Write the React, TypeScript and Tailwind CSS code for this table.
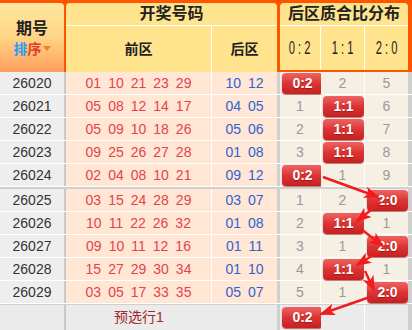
const rows = [
  { p: '26020', f: ['01', '10', '21', '23', '29'], b: ['10', '12'], d: ['0:2', '2', '5'], hit: 0 },
  { p: '26021', f: ['05', '08', '12', '14', '17'], b: ['04', '05'], d: ['1', '1:1', '6'], hit: 1 },
  { p: '26022', f: ['05', '09', '10', '18', '26'], b: ['05', '06'], d: ['2', '1:1', '7'], hit: 1 },
  { p: '26023', f: ['09', '25', '26', '27', '28'], b: ['01', '08'], d: ['3', '1:1', '8'], hit: 1 },
  { p: '26024', f: ['02', '04', '08', '10', '21'], b: ['09', '12'], d: ['0:2', '1', '9'], hit: 0 },
  { p: '26025', f: ['03', '15', '24', '28', '29'], b: ['03', '07'], d: ['1', '2', '2:0'], hit: 2 },
  { p: '26026', f: ['10', '11', '22', '26', '32'], b: ['01', '08'], d: ['2', '1:1', '1'], hit: 1 },
  { p: '26027', f: ['09', '10', '11', '12', '16'], b: ['01', '11'], d: ['3', '1', '2:0'], hit: 2 },
  { p: '26028', f: ['15', '27', '29', '30', '34'], b: ['01', '10'], d: ['4', '1:1', '1'], hit: 1 },
  { p: '26029', f: ['03', '05', '17', '33', '35'], b: ['05', '07'], d: ['5', '1', '2:0'], hit: 2 },
];

const distW = ['w-[41px]', 'w-[44px]', 'w-[43px]'];

// arrows between hit badges: [x1, y1, x2, y2]
const arrows = [
  [323, 177, 378, 197],
  [381, 202, 357, 221],
  [361, 229, 383, 246],
  [380, 251, 357, 265],
  [365, 271, 374, 290],
  [370, 297, 321, 314],
];

const Badge = ({ text }: { text: string }) => (
  <div className="shrink-0 w-[41px] h-[21px] rounded-[4px] bg-gradient-to-b from-[#ef6262] via-[#dc3434] to-[#c52020] shadow-[0_1px_1px_rgba(120,0,0,0.55)] flex items-center justify-center text-white text-[14px] font-bold [text-shadow:0_1px_1px_rgba(100,0,0,0.5)]">
    {text}
  </div>
);

const DistRow = ({ d, hit, footer }: { d: string[]; hit: number; footer?: boolean }) => (
  <div className="w-[135px] flex border-l-[3px] border-r-[4px] border-[#cfcfcf]">
    {d.map((v, i) => (
      <div
        key={i}
        className={`${distW[i]} flex items-center ${i === hit ? 'justify-start pl-[2px]' : 'justify-center'} ${i < 2 ? 'border-r border-white' : ''} text-[#9a9a9a] text-[14px] ${footer ? 'bg-[#ebebeb]' : 'bg-[#f5efe4]'}`}
      >
        {i === hit ? <Badge text={v} /> : v}
      </div>
    ))}
  </div>
);

const Row = ({ r }: { r: (typeof rows)[number] }) => (
  <div className="flex h-[23px] border-b border-white">
    <div className="w-[66px] border-r-2 border-[#c9c9c9] bg-[#efeeef] flex items-center justify-center text-[14px] text-[#333]">
      {r.p}
    </div>
    <div className="w-[146px] border-r border-white bg-[#ffe6d5] flex items-center justify-center gap-[7px] text-[14px] text-[#e6434b]">
      {r.f.map((n, i) => (
        <span key={i}>{n}</span>
      ))}
    </div>
    <div className="w-[65px] bg-[#ffe6d5] flex items-center justify-center gap-[7px] text-[14px] text-[#2f64cf]">
      {r.b.map((n, i) => (
        <span key={i}>{n}</span>
      ))}
    </div>
    <DistRow d={r.d} hit={r.hit} />
  </div>
);

const Ratio = ({ t }: { t: string }) => (
  <span className="inline-block text-[18px] text-[#222] scale-x-[0.62] whitespace-pre">{t}</span>
);

export default function App() {
  return (
    <div
      className="relative w-[412px] h-[330px] overflow-hidden bg-white"
      style={{ fontFamily: '"Liberation Sans", "Noto Sans CJK SC", sans-serif' }}
    >
      {/* header */}
      <div className="flex h-[72px] bg-[#ff5500] pt-[3px]">
        <div className="w-[64px] rounded-tr-[4px] bg-gradient-to-b from-[#ffe89e] via-[#ffd486] to-[#ff9d5c] flex flex-col items-center justify-center pt-[2px]">
          <div className="text-[16px] font-bold text-[#222] leading-[20px]">期号</div>
          <div className="flex items-center text-[14px] font-bold leading-[20px]">
            <span className="text-[#2a9cf5]">排</span>
            <span className="text-[#e03a2a]">序</span>
            <span className="ml-[1px] w-0 h-0 border-l-[4px] border-r-[4px] border-t-[5px] border-l-transparent border-r-transparent border-t-[#ff7a1a]" />
          </div>
        </div>
        <div className="w-[211px] ml-[2px] rounded-t-[4px] bg-[#ffe48d] flex flex-col">
          <div className="h-[23px] border-b border-white flex items-center justify-center text-[16px] font-bold text-[#222]">
            开奖号码
          </div>
          <div className="flex-1 flex">
            <div className="w-[146px] border-r border-white flex items-center justify-center text-[14px] font-bold text-[#222]">
              前区
            </div>
            <div className="flex-1 flex items-center justify-center text-[14px] font-bold text-[#222]">后区</div>
          </div>
        </div>
        <div className="w-[128px] ml-[3px] mb-[2px] rounded-tl-[4px] rounded-tr-[4px] bg-[#ffe48d] flex flex-col">
          <div className="h-[23px] border-b border-white flex items-center justify-center text-[16px] font-bold text-[#222] whitespace-nowrap">
            后区质合比分布
          </div>
          <div className="flex-1 flex">
            <div className="w-[41px] border-r border-white flex items-center justify-center">
              <Ratio t="0 : 2" />
            </div>
            <div className="w-[44px] border-r border-white flex items-center justify-center">
              <Ratio t="1 : 1" />
            </div>
            <div className="w-[43px] flex items-center justify-center">
              <Ratio t="2 : 0" />
            </div>
          </div>
        </div>
      </div>

      {/* body */}
      <div className="flex flex-col">
        {rows.slice(0, 5).map((r) => (
          <Row key={r.p} r={r} />
        ))}
        <div className="h-[2px] bg-[#cfcfcf]" />
        {rows.slice(5).map((r) => (
          <Row key={r.p} r={r} />
        ))}
        <div className="flex h-[26px] border-t border-[#d0d0d0]">
          <div className="w-[66px] border-r-2 border-[#c9c9c9] bg-[#ebebeb]" />
          <div className="w-[146px] bg-[#ebebeb] flex items-center justify-center text-[14px] text-[#a3282a]">
            预选行1
          </div>
          <div className="w-[65px] bg-[#ebebeb]" />
          <DistRow d={['0:2', '', '']} hit={0} footer />
        </div>
      </div>

      {/* trend arrows */}
      <svg className="absolute inset-0 pointer-events-none" width="412" height="330">
        <defs>
          <marker id="ah" markerWidth="16" markerHeight="12" refX="14" refY="6" orient="auto" markerUnits="userSpaceOnUse">
            <path d="M0,0 L16,6 L0,12 L4,6 z" fill="#f21c1c" />
          </marker>
        </defs>
        {arrows.map(([x1, y1, x2, y2], i) => (
          <line key={i} x1={x1} y1={y1} x2={x2} y2={y2} stroke="#f21c1c" strokeWidth="2.4" markerEnd="url(#ah)" />
        ))}
      </svg>
    </div>
  );
}
